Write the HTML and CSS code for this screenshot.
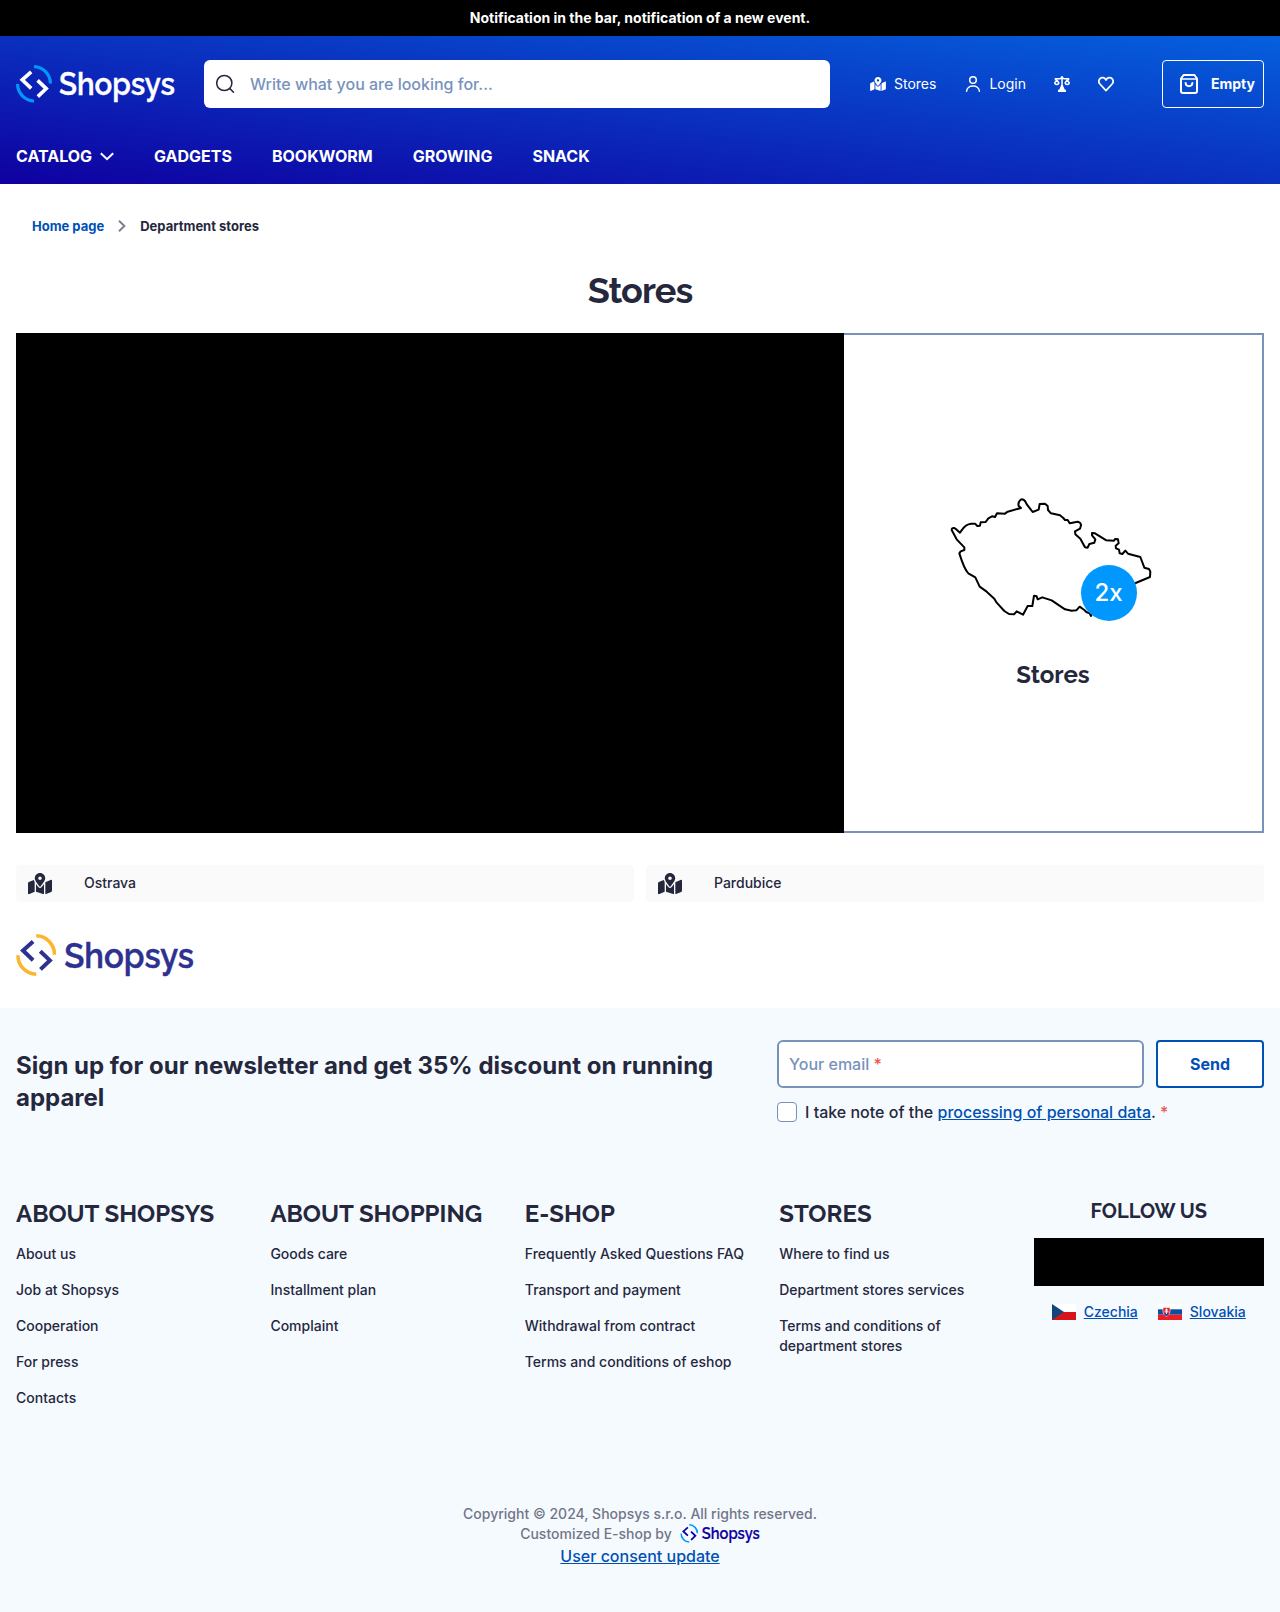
FILE: index.html
```html
<!DOCTYPE html>
<html lang="en">
<head>
<meta charset="utf-8">
<title>Department stores</title>
<link rel="stylesheet" href="styles.css">
</head>
<body>
<svg class="sprite" aria-hidden="true">
  <symbol id="map" viewBox="0 0 576 512"><path fill="currentColor" d="M288 0c-69.59 0-126 56.41-126 126 0 56.26 82.35 158.8 113.9 196.02 6.39 7.54 17.82 7.54 24.2 0C331.65 284.8 414 182.26 414 126 414 56.41 357.59 0 288 0zm0 168c-23.2 0-42-18.8-42-42s18.8-42 42-42 42 18.8 42 42-18.8 42-42 42zM20.12 215.95A32.006 32.006 0 0 0 0 245.66v250.32c0 11.32 11.43 19.06 21.94 14.86L160 448V214.92c-8.84-15.98-16.07-31.54-21.25-46.42L20.12 215.95zM288 359.67c-14.07 0-27.38-6.18-36.51-16.96-19.66-23.2-40.57-49.62-59.49-76.72v182l192 64V266c-18.92 27.09-39.82 53.52-59.49 76.72-9.13 10.77-22.44 16.95-36.51 16.95zm266.06-198.51L416 224v288l139.88-55.95A31.996 31.996 0 0 0 576 426.34V176.02c0-11.32-11.43-19.06-21.94-14.86z"/></symbol>
  <symbol id="mark" viewBox="0 0 36 38">
    <g fill="none" stroke="var(--arc)" stroke-width="3.2"><path d="M18 1.6A16.6 17 0 0 1 34.4 18.6"/><path d="M1.6 19A16.6 17 0 0 0 18 36"/></g>
    <g fill="none" stroke="currentColor" stroke-width="3.6"><path d="M15.2 6.8 6.2 14.8 15.2 23.4"/><path d="M21.6 15.4 30.2 23.6 21.8 31.6"/></g>
  </symbol>
</svg>

<div class="notification">Notification in the bar, notification of a new event.</div>

<header class="header">
  <div class="header-top">
    <svg class="logo logo-header" viewBox="0 0 159 38"><use href="#mark" width="36" height="38"/><text x="43" y="30" textLength="116" lengthAdjust="spacingAndGlyphs">Shopsys</text></svg>
    <div class="search">
      <svg width="20" height="20" viewBox="0 0 20 20" fill="none" stroke="#25283d" stroke-width="1.5" stroke-linecap="round"><circle cx="8.300" cy="9" r="7.600"/><path d="m13.900 14.600 3.600 3.600"/></svg>
      <span>Write what you are looking for...</span>
    </div>
    <div class="user-menu">
      <a class="user-item stores-link"><svg width="16" height="14"><use href="#map"/></svg>Stores</a>
      <a class="user-item"><svg width="16" height="16" viewBox="0 0 16 16" fill="none" stroke="currentColor" stroke-width="1.5" stroke-linecap="round"><circle cx="8" cy="4" r="3.3"/><path d="M1.6 15.2c.4-7 12.4-7 12.8 0"/></svg>Login</a>
      <a class="user-item"><svg width="16" height="16" viewBox="0 0 16 16" fill="none" stroke="currentColor" stroke-width="1.500"><path d="M1.500 4.300V2.700h4.700q1.800-1.800 3.600 0h4.700v1.600M8 0v12"/><path fill="currentColor" stroke="none" d="M7.200 9h1.600l2 4.800H12V16H4v-2.200h1.200z"/><path d="M.8 6.800c0 2.300 4 2.300 4 0L2.800 4zM11.200 6.800c0 2.300 4 2.300 4 0L13.200 4z" stroke-width="1.500"/></svg></a>
      <a class="user-item"><svg width="16" height="16" viewBox="0 0 16 16" fill="none" stroke="currentColor" stroke-width="1.700" stroke-linejoin="round"><path d="M8 4C6.400 1.200 3.600 1.100 2 2.700.5 4.300.6 6.400 1.900 8L8 14.600 14.100 8c1.300-1.600 1.400-3.700-.1-5.300C12.400 1.100 9.600 1.200 8 4z"/></svg></a>
    </div>
    <a class="cart"><svg width="18" height="20" viewBox="0 0 18 20" fill="none" stroke="currentColor" stroke-width="2" stroke-linejoin="round" stroke-linecap="round"><path d="M3.600 1h10.800L17 4.500V17a2 2 0 0 1-2 2H3a2 2 0 0 1-2-2V4.500z"/><path d="M1.500 5h15" stroke-width="1.600"/><path d="M5.600 9c.3 4.200 6.500 4.200 6.800 0"/></svg>Empty</a>
  </div>
  <nav class="nav">
    <a>CATALOG<svg width="14" height="9" viewBox="0 0 14 9" fill="none" stroke="currentColor" stroke-width="2"><path d="m.8 1.200 6.200 6 6.200-6"/></svg></a>
    <a>GADGETS</a><a>BOOKWORM</a><a>GROWING</a><a>SNACK</a>
  </nav>
</header>

<main class="main">
  <div class="breadcrumbs"><a>Home page</a><svg width="8" height="12" viewBox="0 0 8 12" fill="none" stroke="#7a7d93" stroke-width="1.900"><path d="m1 .8 5.400 5.200L1 11.200"/></svg><span>Department stores</span></div>
  <h1 class="title">Stores</h1>
  <section class="store-map">
    <div class="map-canvas"></div>
    <div class="map-info">
      <div class="country">
        <svg width="202" height="122" viewBox="15 24 606 366" fill="none" stroke="#000" stroke-width="6" stroke-linejoin="round"><path d="M20 120Q20 113 28 114L35 119 45 128 52 118Q62 103 78 101L90 101 97 108 105 107 107 97 122 96 130 85 141 79 150 81 156 70 180 71 188 65 228 54 221 48Q218 38 227 29 234 26 240 33L246 44 263 66 281 59 284 42 300 41 308 48 309 60 318 70 345 76 355 84 360 90 368 90 374 100 398 95Q409 99 408 106L405 116 390 124 391 133 406 146 420 172 428 173 433 162 448 158 451 148 441 136 441 129 450 130 484 151 507 152 510 147 519 148 521 160 512 167 513 175 522 179 524 190 532 192 541 182 549 191 586 201 598 233 612 237 616 245 615 261 572 279 530 310 480 368 440 370 438 378 434 370 424 366 418 360 404 350 394 361 380 362 360 358 320 331 292 322 278 328 275 319 267 317 262 348 248 348 234 374 215 364 207 373 192 372 178 363 155 338 148 326 125 305 104 290 91 262 70 250Q58 238 43 190L47 184 58 180 58 172 35 148Z"/></svg>
        <span class="count">2x</span>
      </div>
      <div class="map-title">Stores</div>
    </div>
  </section>
  <div class="store-list">
    <div class="store"><svg width="24" height="21.300"><use href="#map"/></svg><span>Ostrava</span></div>
    <div class="store"><svg width="24" height="21.300"><use href="#map"/></svg><span>Pardubice</span></div>
  </div>
  <svg class="logo logo-brand" viewBox="0 0 159 38"><use href="#mark" width="36" height="38"/><text x="43" y="30" textLength="116" lengthAdjust="spacingAndGlyphs">Shopsys</text></svg>
</main>

<footer class="footer">
  <section class="newsletter">
    <h2>Sign up for our newsletter and get 35% discount on running apparel</h2>
    <div class="form">
      <div class="form-row"><div class="email">Your email&nbsp;<b>*</b></div><a class="send">Send</a></div>
      <div class="consent"><i class="box"></i><span>I take note of the <a>processing of personal data</a>. <b>*</b></span></div>
    </div>
  </section>
  <section class="columns">
    <div class="column"><h3>ABOUT SHOPSYS</h3><a>About us</a><a>Job at Shopsys</a><a>Cooperation</a><a>For press</a><a>Contacts</a></div>
    <div class="column"><h3>ABOUT SHOPPING</h3><a>Goods care</a><a>Installment plan</a><a>Complaint</a></div>
    <div class="column"><h3>E-SHOP</h3><a>Frequently Asked Questions FAQ</a><a>Transport and payment</a><a>Withdrawal from contract</a><a>Terms and conditions of eshop</a></div>
    <div class="column"><h3>STORES</h3><a>Where to find us</a><a>Department stores services</a><a>Terms and conditions of department stores</a></div>
    <div class="follow">
      <h4>FOLLOW US</h4>
      <div class="social"></div>
      <div class="countries">
        <a><svg width="24" height="16" viewBox="0 0 24 16"><path fill="#fff" d="M0 0h24v8H0z"/><path fill="#d7141a" d="M0 8h24v8H0z"/><path fill="#11457e" d="M0 0l12 8-12 8z"/></svg><span>Czechia</span></a>
        <a><svg width="24" height="16" viewBox="0 0 24 16"><path fill="#fff" d="M0 0h24v5.300H0z"/><path fill="#0b4ea2" d="M0 5.300h24v5.400H0z"/><path fill="#ee1c25" d="M0 10.700h24V16H0z"/><path fill="#ee1c25" stroke="#fff" stroke-width=".6" d="M5 3.600h7c.3 4.500 0 7-3.500 8.800C5 10.600 4.700 8.100 5 3.600z"/><path fill="#0b4ea2" d="M6 10q2.500-2 5 0-1 1.500-2.500 2Q7 11.500 6 10z"/><path stroke="#fff" stroke-width=".9" d="M8.500 4.600V10M7 6h3M6.500 7.800h4"/></svg><span>Slovakia</span></a>
      </div>
    </div>
  </section>
  <div class="copyright">
    <div>Copyright © 2024, Shopsys s.r.o. All rights reserved.</div>
    <div class="by">Customized E-shop by <svg class="logo logo-small" viewBox="0 0 159 38"><use href="#mark" width="36" height="38"/><text x="43" y="30" textLength="116" lengthAdjust="spacingAndGlyphs">Shopsys</text></svg></div>
    <a>User consent update</a>
  </div>
</footer>
</body>
</html>
```
FILE: styles.css
```css
* { box-sizing: border-box; }
body { margin: 0; font-family: Inter, sans-serif; font-size: 16px; line-height: 24px; font-weight: 500; color: #25283d; background: #fff; }
h1, h2, h3, h4 { margin: 0; font-weight: 700; }
svg { display: block; flex: none; }
.sprite { position: absolute; width: 0; height: 0; }
.logo { overflow: visible; }
.logo text { font-family: Raleway, Lato, sans-serif; font-size: 32px; font-weight: 600; fill: currentColor; stroke: currentColor; stroke-width: .4px; }
.notification { height: 36px; background: #000; color: #fff; font-size: 14px; line-height: 36px; font-weight: 700; text-align: center; }

.header { height: 148px; padding: 24px 16px 0; color: #fff; background: linear-gradient(to top right, #0f00a0, #0560dd); }
.header-top { display: flex; align-items: center; height: 48px; }
.logo-header { width: 159px; height: 38px; margin-right: 29px; --arc: #0098ff; color: #fff; }
.search { width: 626px; height: 48px; display: flex; align-items: center; gap: 14px; padding-left: 12px; border-radius: 6px; background: #fff; color: #7892bc; }
.user-menu { display: flex; gap: 28px; margin-left: 40px; font-size: 14px; font-weight: 400; }
.user-item { display: flex; align-items: center; gap: 8px; }
.stores-link { margin-right: 1px; }
.cart { width: 102px; height: 48px; margin-left: auto; display: flex; align-items: center; gap: 13px; padding-left: 17px; border: 1px solid #fff; border-radius: 4px; font-size: 14px; font-weight: 700; }
.nav { display: flex; gap: 40px; margin-top: 36px; font-weight: 700; }
.nav a { display: flex; align-items: center; gap: 8px; }

.main { padding: 0 16px; }
.breadcrumbs { display: flex; align-items: center; gap: 14px; height: 20px; margin: 32px 0 0 16px; font-size: 13px; font-weight: 700; }
.breadcrumbs a { color: #0050b5; }
.title { margin-top: 30px; font-family: Raleway, Lato, sans-serif; font-size: 36px; line-height: 48px; letter-spacing: -.9px; text-align: center; }
.store-map { display: flex; height: 500px; margin-top: 19px; }
.map-canvas { width: 828px; background: #000; }
.map-info { flex: 1; display: flex; flex-direction: column; align-items: center; padding-top: 163px; border: 2px solid #7892bc; border-left: 0; }
.country { position: relative; margin-right: 5px; }
.count { position: absolute; left: 131px; top: 67px; width: 56px; height: 56px; border-radius: 50%; background: #0098ff; color: #fff; font-size: 24px; line-height: 56px; text-align: center; }
.map-title { margin-top: 39px; font-family: Raleway, Lato, sans-serif; font-size: 24px; line-height: 32px; font-weight: 700; }
.store-list { display: grid; grid-template-columns: 1fr 1fr; gap: 12px; margin-top: 32px; font-size: 14px; }
.store { display: flex; align-items: center; gap: 32px; height: 37px; padding-left: 12px; border-radius: 4px; background: #fafafa; }
.store span { padding-bottom: 2px; }
.logo-brand { width: 178px; height: 42.500px; margin-top: 32px; --arc: #fcb62e; color: #2d318f; }

.footer { height: 604px; margin-top: 31.500px; padding: 32px 16px 0; background: #f5faff; }
.newsletter { display: flex; justify-content: space-between; }
.newsletter h2 { width: 720px; padding-top: 10px; font-size: 24px; line-height: 32px; }
.form { width: 487px; }
.form-row { display: flex; gap: 12px; }
.email, .send { height: 48px; border-radius: 6px; background: #fff; line-height: 44px; border: 2px solid #7892bc; }
.email { flex: 1; padding-left: 10px; color: #7892bc; }
.send { width: 108px; border-radius: 4px; border-color: #0050b5; color: #0050b5; font-weight: 700; text-align: center; }
.form b { color: #ef5353; font-weight: 500; }
.consent { display: flex; align-items: center; gap: 8px; margin-top: 12px; }
.box { width: 20px; height: 20px; border: 1px solid #7892bc; border-radius: 4px; background: #fff; }
.consent a, .countries a, .copyright a { color: #0050b5; text-decoration: underline; }
.columns { display: grid; grid-template-columns: repeat(5, 1fr); gap: 24px; height: 306px; margin-top: 74px; }
.column { display: flex; flex-direction: column; gap: 16px; font-size: 14px; line-height: 20px; }
.column h3 { margin-bottom: -1px; font-family: Raleway, Lato, sans-serif; font-size: 24px; line-height: 31px; white-space: nowrap; }
.follow h4 { font-family: Raleway, Lato, sans-serif; font-size: 20px; line-height: 26px; text-align: center; }
.social { height: 48px; margin-top: 14px; background: #000; }
.countries { display: flex; justify-content: center; gap: 20px; margin-top: 16px; font-size: 14px; line-height: 20px; }
.countries a { display: flex; align-items: center; gap: 8px; text-decoration: none; }
.countries span { text-decoration: underline; }
.copyright { display: flex; flex-direction: column; align-items: center; font-size: 14px; line-height: 20px; color: #727588; }
.copyright a { font-size: 16px; line-height: 24px; }
.by { display: flex; gap: 8px; }
.logo-small { width: 80px; height: 19px; --arc: #0098ff; color: #0f00a0; }
```
